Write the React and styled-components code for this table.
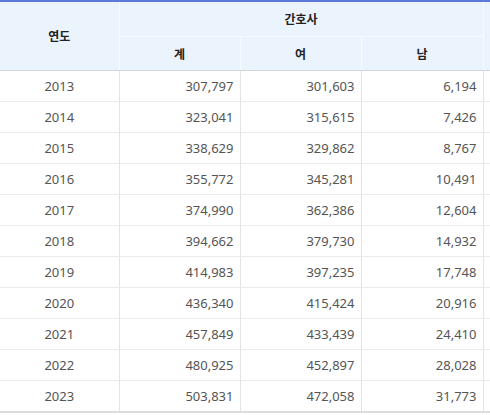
import React from 'react'
import styled, { createGlobalStyle } from 'styled-components'

const GlobalStyle = createGlobalStyle`
  html, body {
    margin: 0;
    padding: 0;
    background: #fff;
    font-family: "Noto Sans", "Noto Sans CJK KR", sans-serif;
  }
`

const rows = [
  ['2013', '307,797', '301,603', '6,194'],
  ['2014', '323,041', '315,615', '7,426'],
  ['2015', '338,629', '329,862', '8,767'],
  ['2016', '355,772', '345,281', '10,491'],
  ['2017', '374,990', '362,386', '12,604'],
  ['2018', '394,662', '379,730', '14,932'],
  ['2019', '414,983', '397,235', '17,748'],
  ['2020', '436,340', '415,424', '20,916'],
  ['2021', '457,849', '433,439', '24,410'],
  ['2022', '480,925', '452,897', '28,028'],
  ['2023', '503,831', '472,058', '31,773'],
]

const Wrap = styled.div`
  width: 490px;
  overflow: hidden;
`

const Table = styled.table`
  width: 600px;
  border-collapse: collapse;
  table-layout: fixed;
  border-top: 2px solid #5b79d9;
  border-bottom: 2px solid #dcdcdc;
`

const Head = styled.th`
  height: ${(p) => p.$h}px;
  padding: 0;
  background: #ebf3fc;
  color: #222;
  font-size: 12px;
  font-weight: 700;
  text-align: center;
  border-right: 1px solid #f7faff;
  border-bottom: ${(p) => (p.$last ? '1px solid #cfd6e0' : '1px solid #f7faff')};
`

const Cell = styled.td`
  height: 30px;
  padding: 0 ${(p) => (p.$center ? '0' : '6px')} 0 0;
  color: #555;
  font-size: 13px;
  text-align: ${(p) => (p.$center ? 'center' : 'right')};
  border-right: 1px solid #e3e3e3;
  border-bottom: 1px solid #ebebeb;
`

export default function App() {
  return (
    <Wrap>
      <GlobalStyle />
      <Table>
        <colgroup>
          <col style={{ width: 119 }} />
          <col style={{ width: 121 }} />
          <col style={{ width: 121 }} />
          <col style={{ width: 122 }} />
          <col />
        </colgroup>
        <thead>
          <tr>
            <Head rowSpan={2} $h={34} $last>연도</Head>
            <Head colSpan={3} $h={34}>간호사</Head>
            <Head rowSpan={2} $h={34} $last></Head>
          </tr>
          <tr>
            <Head $h={33} $last>계</Head>
            <Head $h={33} $last>여</Head>
            <Head $h={33} $last>남</Head>
          </tr>
        </thead>
        <tbody>
          {rows.map((r) => (
            <tr key={r[0]}>
              <Cell $center>{r[0]}</Cell>
              <Cell>{r[1]}</Cell>
              <Cell>{r[2]}</Cell>
              <Cell>{r[3]}</Cell>
              <Cell></Cell>
            </tr>
          ))}
        </tbody>
      </Table>
    </Wrap>
  )
}
